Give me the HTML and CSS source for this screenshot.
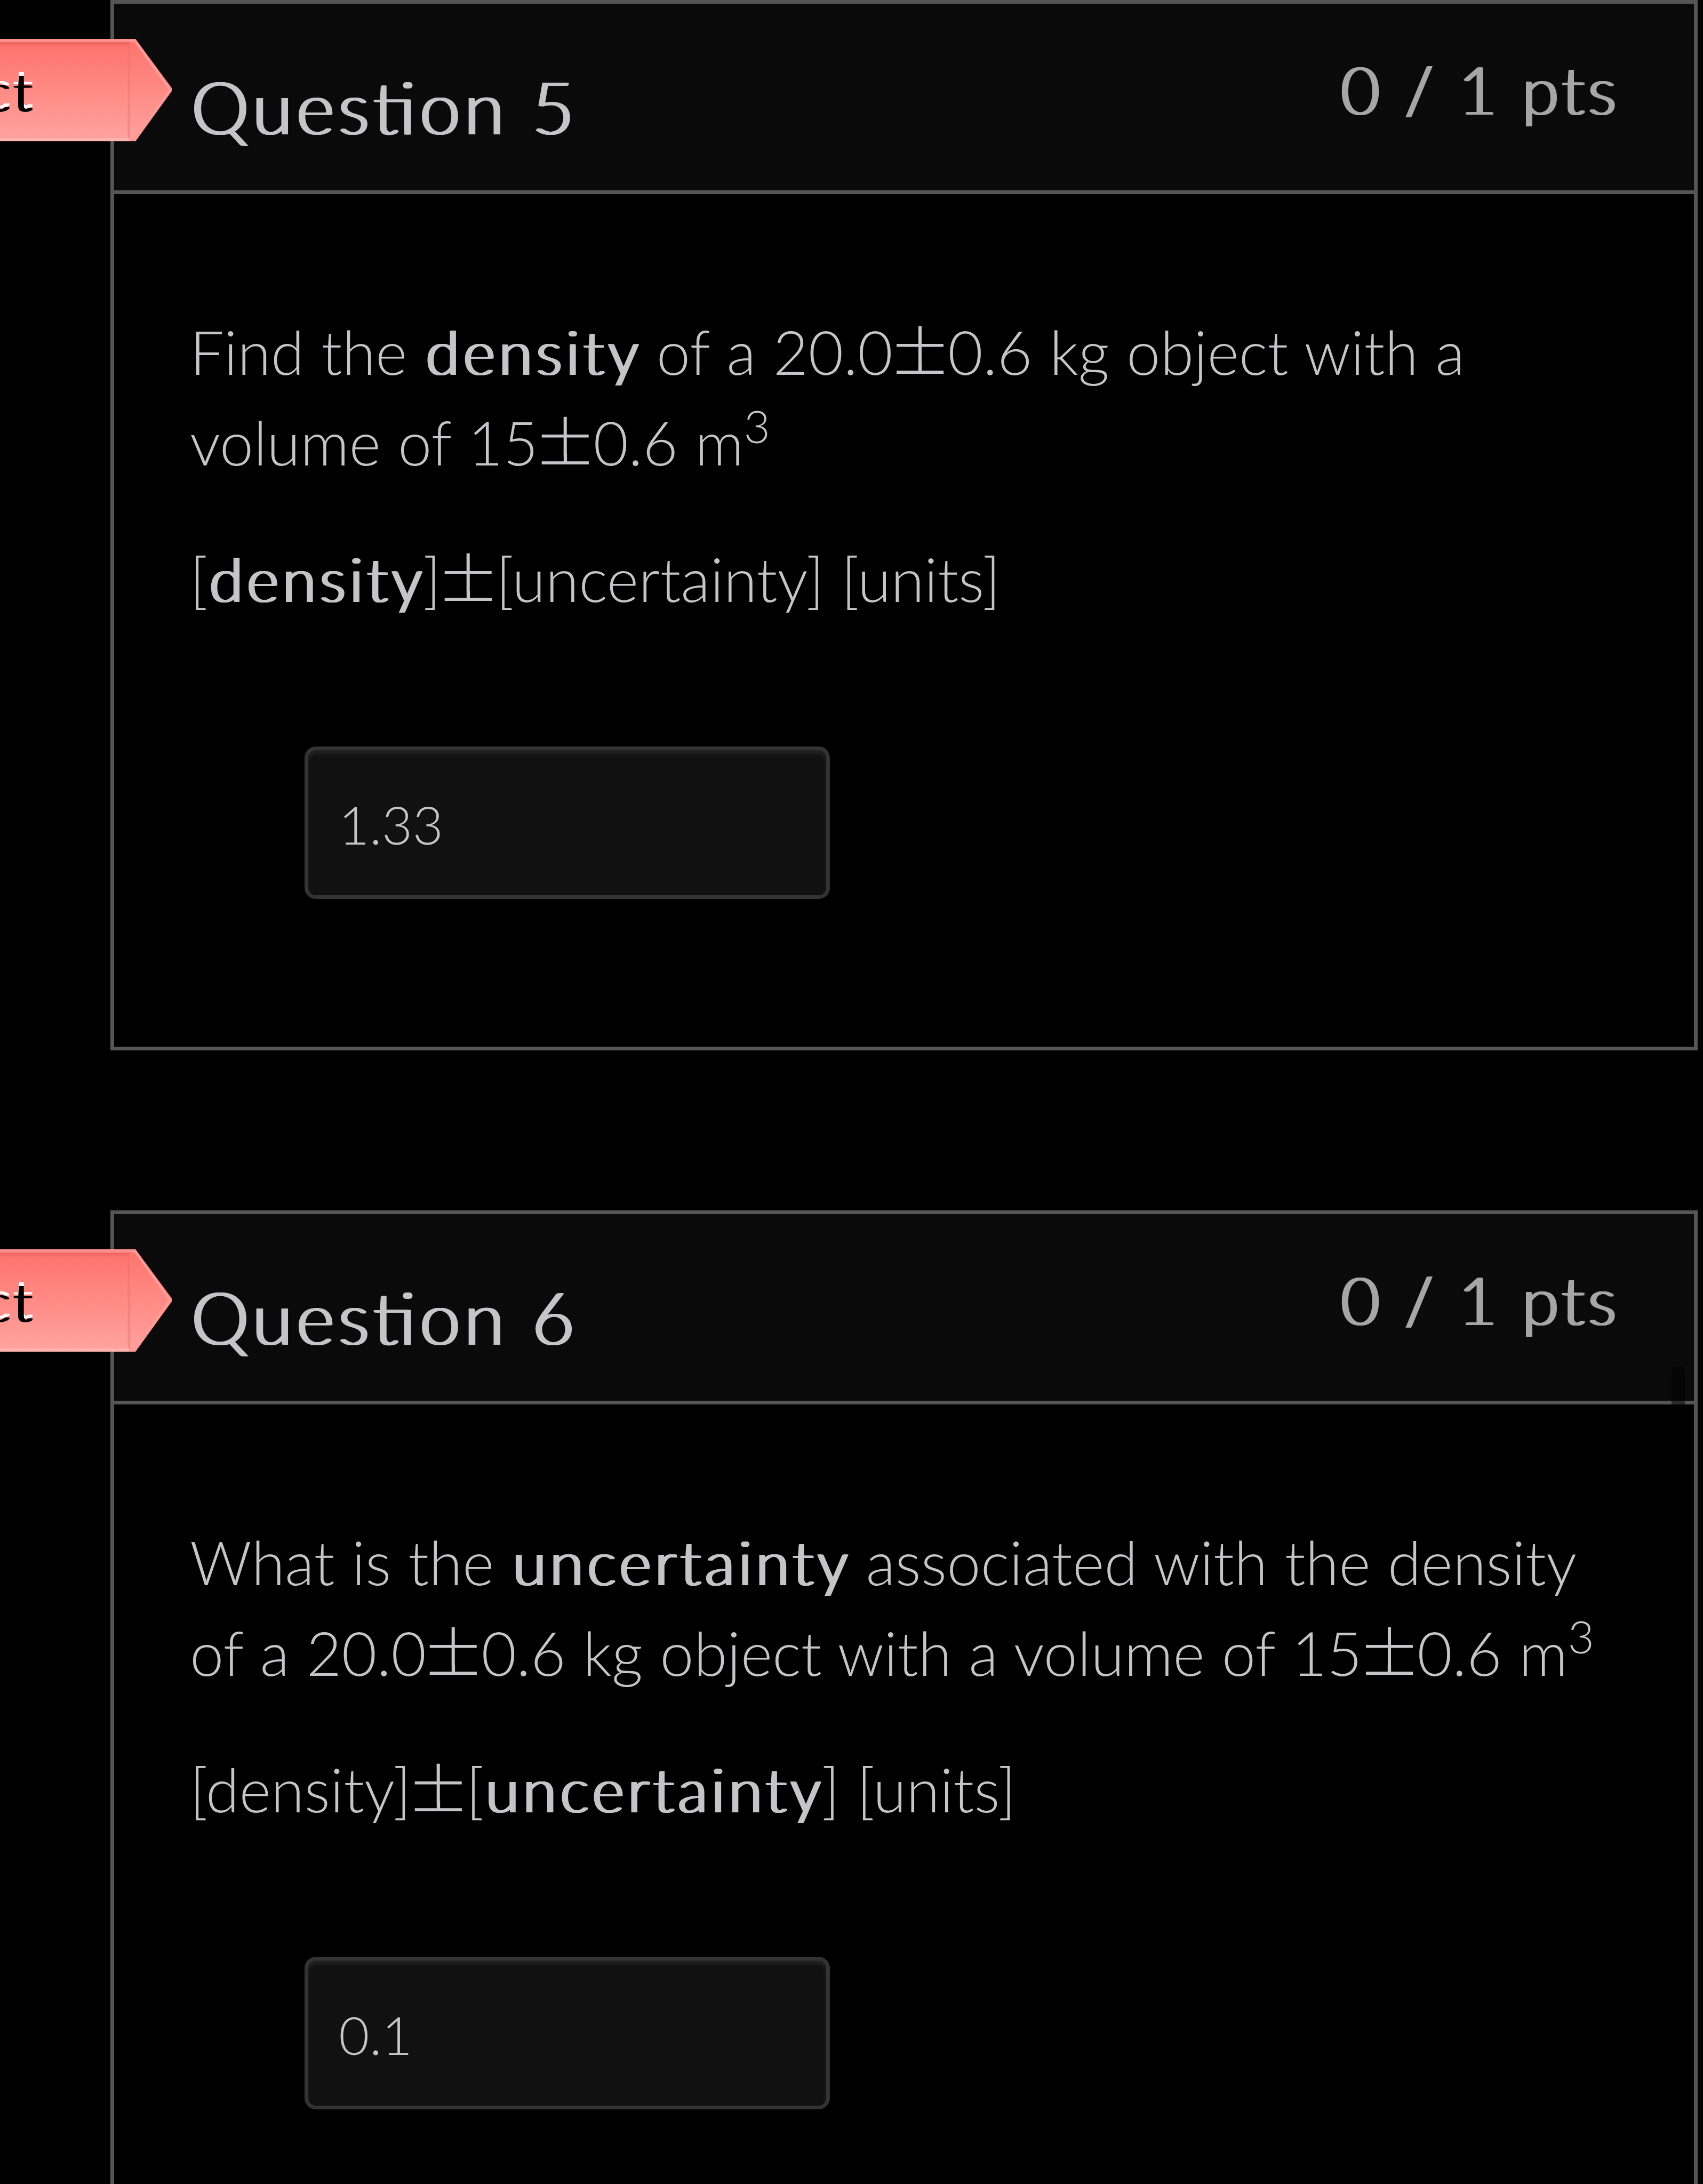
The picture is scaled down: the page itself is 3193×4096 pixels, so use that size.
FILE: index.html
```html
<!DOCTYPE html>
<html lang="en">
<head>
    <meta charset="UTF-8">
    <meta name="viewport" content="width=device-width, initial-scale=1.0">
    <title>Quiz Results</title>
    <link rel="stylesheet" href="styles.css">
</head>
<body>
    <div class="question">
        <div class="answer-flag">
            <span>Incorrect</span>
            <svg class="flag-tip" viewBox="0 0 80 192">
                <defs>
                    <linearGradient id="flagFill" x1="0" y1="0" x2="0" y2="1">
                        <stop offset="0" stop-color="#ff736c"/>
                        <stop offset="1" stop-color="#ffa29e"/>
                    </linearGradient>
                </defs>
                <path d="M0 0H12L80 92V98L12 192H0Z" fill="url(#flagFill)"/>
                <path d="M0 3H11L77 95L11 189H0" fill="none" stroke="#ff9a95" stroke-width="5"/>
                <path d="M0 6V186" stroke="#f5756f" stroke-width="2"/>
            </svg>
        </div>
        <div class="header">
            <h2>Question 5</h2>
            <div class="points">0 / 1 pts</div>
        </div>
        <div class="text">
            <p>Find the <strong>density</strong> of a 20.0<span class="pm">±</span>0.6 kg object with a volume of 15<span class="pm">±</span>0.6 m<sup>3</sup></p>
            <p>[<strong>density</strong>]<span class="pm">±</span>[uncertainty] [units]</p>
            <input type="text" class="answer" value="1.33" readonly>
        </div>
    </div>

    <div class="question last">
        <div class="answer-flag">
            <span>Incorrect</span>
            <svg class="flag-tip" viewBox="0 0 80 192">
                <path d="M0 0H12L80 92V98L12 192H0Z" fill="url(#flagFill)"/>
                <path d="M0 3H11L77 95L11 189H0" fill="none" stroke="#ff9a95" stroke-width="5"/>
                <path d="M0 6V186" stroke="#f5756f" stroke-width="2"/>
            </svg>
        </div>
        <div class="header">
            <h2>Question 6</h2>
            <div class="points">0 / 1 pts</div>
        </div>
        <div class="text">
            <p>What is the <strong>uncertainty</strong> associated with the density of a 20.0<span class="pm">±</span>0.6 kg object with a volume of 15<span class="pm">±</span>0.6 m<sup>3</sup></p>
            <p>[density]<span class="pm">±</span>[<strong>uncertainty</strong>] [units]</p>
            <input type="text" class="answer" value="0.1" readonly>
        </div>
    </div>

    <div class="scroll-thumb"></div>
</body>
</html>
```
FILE: styles.css
```css
* {
    box-sizing: border-box;
}

html {
    overflow: hidden;
    background: #000;
}

body {
    margin: 0;
    height: 4096px;
    overflow: hidden;
    position: relative;
    color: #c5c5c7;
    font-family: Lato, "Liberation Sans", sans-serif;
    font-size: 113.8px;
    font-weight: 300;
    line-height: 170.4px;
}

.question {
    position: relative;
    width: 2976px;
    height: 1970px;
    margin: 0 0 300px 207px;
    border: 7px solid #555;
}

/* runs on below the fold */
.question.last {
    height: 1826px;
    margin-bottom: 0;
    border-bottom: 0;
}

/* light face thickened sideways */
.header h2,
.points,
.text strong {
    font-weight: 300;
    text-shadow: 1.5px 0, 3px 0, 4.5px 0, 6px 0;
}

.header {
    display: flex;
    justify-content: space-between;
    height: 357px;
    padding: 0 142px;
    background: #0a0a0a;
    border-bottom: 7px solid #555;
}

.header h2 {
    margin: 107px 0 0;
    font-size: 136.3px;
    line-height: 170px;
    letter-spacing: 7.6px;
    font-feature-settings: "liga" 1;
}

.points {
    margin-top: 80px;
    color: #a6a6a6;
    font-size: 125px;
    line-height: 160px;
    letter-spacing: 6.4px;
}

.text {
    padding: 210px 130px 0 142px;
    word-spacing: 1.2px;
}

.text p {
    margin: 0 0 85px;
}

.text strong {
    margin-right: -3px;
    letter-spacing: 7.4px;
}

.text sup {
    position: relative;
    top: -0.5em;
    font-size: 75%;
    line-height: 0;
    vertical-align: baseline;
}

.pm {
    display: inline-block;
    position: relative;
    width: 103px;
    text-indent: -6px;
    font-family: "Noto Sans CJK JP", sans-serif;
    line-height: 0;
    transform: scaleX(1.05);
}

/* joins the plus to the bar below it */
.pm::after {
    content: "";
    position: absolute;
    top: 28px;
    left: 48px;
    width: 6px;
    height: 15px;
    background: currentColor;
}

.answer {
    display: block;
    width: 985px;
    height: 286px;
    margin: 230px 0 0 215px;
    padding: 4px 57px 0;
    background: #111;
    border: 7px solid #333;
    border-radius: 21px;
    box-shadow: inset 0 7px 7px rgba(255, 255, 255, 0.075);
    color: #c5c5c7;
    font: 300 99.4px Lato, sans-serif;
}

/* red label sticking out over the left edge of the card */
.answer-flag {
    position: absolute;
    top: 66px;
    right: 2854px;
    display: flex;
    height: 192px;
}

.answer-flag span {
    padding-right: 178px;
    background: linear-gradient(#ff736c, #ffa29e);
    border-top: 6px solid #ff8f89;
    border-bottom: 6px solid #ffb3af;
    box-shadow: inset 0 6px 4px #ee6a64;
    color: #000;
    font-size: 99.4px;
    letter-spacing: 7px;
    line-height: 184px;
    text-shadow: 1.5px 0, 3px 0, 4.5px 0, 6px 0, 0 -7px #fff, 3px -7px #fff, 6px -7px #fff;
}

.flag-tip {
    width: 80px;
    height: 192px;
}

.scroll-thumb {
    position: absolute;
    top: 2561px;
    right: 34px;
    width: 25px;
    height: 400px;
    border-radius: 13px;
    background: rgba(0, 0, 0, 0.5);
}
```
